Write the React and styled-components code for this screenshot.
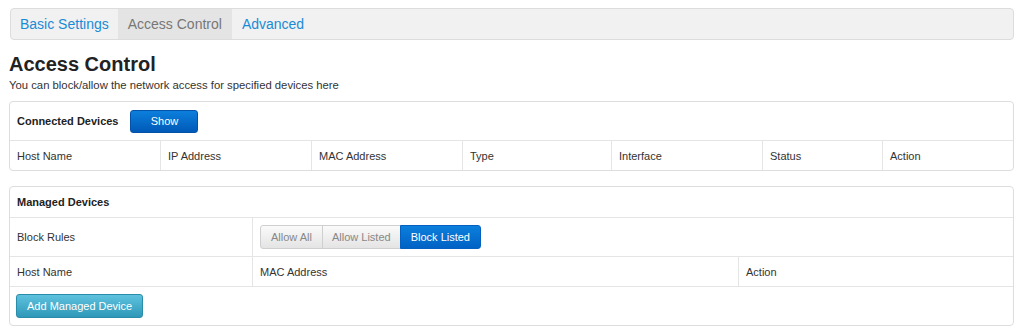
import styled, { createGlobalStyle } from 'styled-components'

const GlobalStyle = createGlobalStyle`
	body {
		margin: 0;
		background: #fff;
		font-family: "Liberation Sans", Arial, sans-serif;
		color: #333;
	}
`

const Page = styled.div`
	padding: 8px 10px 8px 9px;
`

const TabBar = styled.nav`
	margin-left: 1px;
	height: 30px;
	display: flex;
	align-items: stretch;
	background: #f1f1f1;
	border: 1px solid #dcdcdc;
	border-radius: 4px;
`

const Tab = styled.a`
	display: flex;
	align-items: center;
	padding: 0 ${p => p.$pad || 10}px;
	font-size: 14px;
	color: ${p => (p.$active ? '#777' : '#1a8bd6')};
	background: ${p => (p.$active ? '#e4e4e4' : 'transparent')};
	cursor: pointer;
`

const Title = styled.h1`
	margin: 12px 0 0;
	font-size: 20px;
	line-height: 24px;
	font-weight: bold;
	color: #222;
`

const Subtitle = styled.p`
	margin: 2px 0 9px;
	font-size: 11.3px;
	line-height: 14px;
	color: #333;
`

const Panel = styled.section`
	border: 1px solid #ddd;
	border-radius: 4px;
	margin-bottom: 15px;
	font-size: 11px;
`

const PanelHead = styled.div`
	display: flex;
	align-items: center;
	gap: 12px;
	height: ${p => p.$h}px;
	padding: 0 7px;
	font-weight: bold;
	color: #222;
	border-bottom: 1px solid #e5e5e5;
`

const Row = styled.div`
	display: grid;
	grid-template-columns: ${p => p.$cols};
	height: ${p => p.$h}px;
	border-bottom: ${p => (p.$last ? 'none' : '1px solid #e5e5e5')};
`

const Cell = styled.div`
	display: flex;
	align-items: center;
	padding: 0 7px;
	border-left: 1px solid #e5e5e5;
	color: #333;

	&:first-child {
		border-left: none;
	}
`

const PlainRow = styled.div`
	display: flex;
	align-items: center;
	height: ${p => p.$h}px;
	padding: 0 6px;
`

const BlueButton = styled.button`
	height: 23px;
	width: 68px;
	border: 1px solid #0453a8;
	border-radius: 3px;
	background: linear-gradient(#0c7fdc, #0059b8);
	color: #fff;
	font-family: inherit;
	font-size: 11px;
`

const InfoButton = styled.button`
	height: 24px;
	padding: 0 10px;
	border: 1px solid #2a8cab;
	border-radius: 3px;
	background: linear-gradient(#5ec2de, #2f98b8);
	color: #fff;
	font-family: inherit;
	font-size: 11px;
`

const Segmented = styled.div`
	display: flex;
	height: 24px;
`

const Segment = styled.button`
	height: 24px;
	padding: 0 ${p => p.$pad}px;
	margin-left: -1px;
	border: 1px solid ${p => (p.$active ? '#0461c2' : '#cfcfcf')};
	background: ${p => (p.$active ? 'linear-gradient(#0c7fdc, #0062c4)' : 'linear-gradient(#fafafa, #e4e4e4)')};
	color: ${p => (p.$active ? '#fff' : '#888')};
	font-family: inherit;
	font-size: 11px;

	&:first-child {
		margin-left: 0;
		border-radius: 3px 0 0 3px;
	}

	&:last-child {
		border-radius: 0 3px 3px 0;
	}
`

const connectedCols = '150px 151px 151px 149px 151px 120px 1fr'
const managedCols = '242px 486px 1fr'

export default function App() {
	return (
		<Page>
			<GlobalStyle />
			<TabBar>
				<Tab $pad={9}>Basic Settings</Tab>
				<Tab $active>Access Control</Tab>
				<Tab>Advanced</Tab>
			</TabBar>

			<Title>Access Control</Title>
			<Subtitle>You can block/allow the network access for specified devices here</Subtitle>

			<Panel>
				<PanelHead $h={38}>
					Connected Devices
					<BlueButton>Show</BlueButton>
				</PanelHead>
				<Row $cols={connectedCols} $h={29} $last>
					{['Host Name', 'IP Address', 'MAC Address', 'Type', 'Interface', 'Status', 'Action'].map(h => (
						<Cell key={h}>{h}</Cell>
					))}
				</Row>
			</Panel>

			<Panel>
				<PanelHead $h={30}>Managed Devices</PanelHead>
				<Row $cols="242px 1fr" $h={38}>
					<Cell>Block Rules</Cell>
					<Cell>
						<Segmented>
							<Segment $pad={10}>Allow All</Segment>
							<Segment $pad={9}>Allow Listed</Segment>
							<Segment $pad={10} $active>Block Listed</Segment>
						</Segmented>
					</Cell>
				</Row>
				<Row $cols={managedCols} $h={29}>
					<Cell>Host Name</Cell>
					<Cell>MAC Address</Cell>
					<Cell>Action</Cell>
				</Row>
				<PlainRow $h={38}>
					<InfoButton>Add Managed Device</InfoButton>
				</PlainRow>
			</Panel>
		</Page>
	)
}
